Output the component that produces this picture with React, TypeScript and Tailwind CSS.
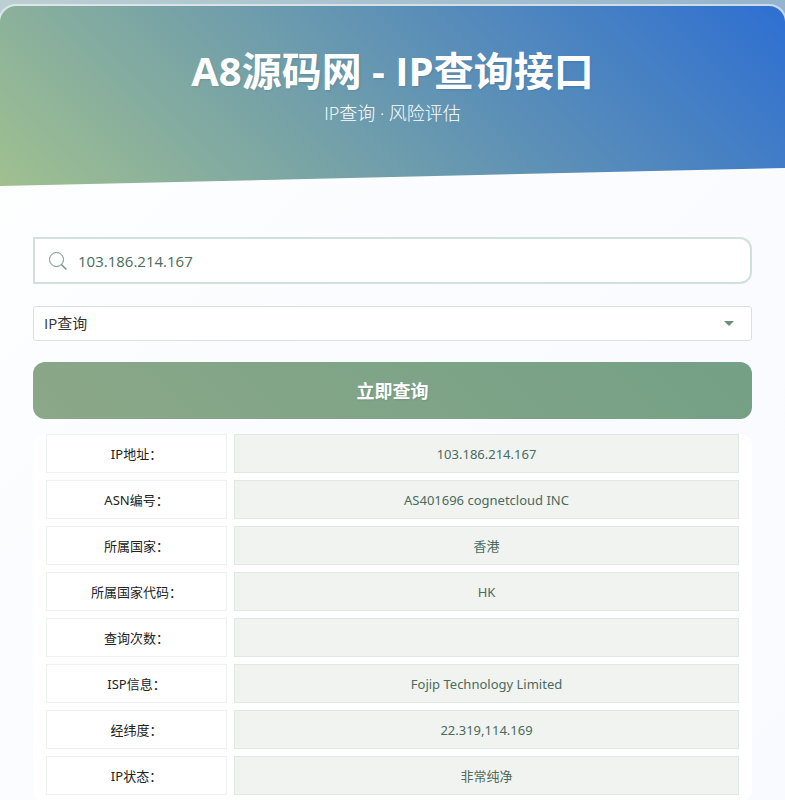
import { useState } from 'react'

const results = [
  { label: 'IP地址：', value: '103.186.214.167' },
  { label: 'ASN编号：', value: 'AS401696 cognetcloud INC' },
  { label: '所属国家：', value: '香港' },
  { label: '所属国家代码：', value: 'HK' },
  { label: '查询次数：', value: '' },
  { label: 'ISP信息：', value: 'Fojip Technology Limited' },
  { label: '经纬度：', value: '22.319,114.169' },
  { label: 'IP状态：', value: '非常纯净' },
]

function SearchIcon() {
  return (
    <svg className="size-[18px] shrink-0 text-[#6f9384]" viewBox="0 0 18 18" fill="none" stroke="currentColor" aria-hidden="true">
      <circle cx="7.5" cy="7.5" r="7" strokeWidth="1" />
      <path d="M12.4 12.4 17.4 17.4" strokeWidth="1.4" />
    </svg>
  )
}

function Header() {
  return (
    <header className="h-[180px] bg-[linear-gradient(45deg,#a0c08f,#2e6fd2)] pt-[41px] text-center text-white [clip-path:polygon(0_0,100%_0,100%_90%,0_100%)]">
      <h1 className="text-[40px] leading-[48px] font-bold [text-shadow:1px_1px_2px_rgba(0,0,0,0.1)]">
        A8源码网 - IP查询接口
      </h1>
      <p className="mt-1 text-lg leading-7 font-light">IP查询 · 风险评估</p>
    </header>
  )
}

function ResultTable() {
  return (
    <div className="mt-[15px] flex rounded-xl bg-white px-[6px]">
      <table className="-mt-[7px] w-full table-fixed border-separate border-spacing-[7px] text-center font-['Noto_Sans','Noto_Sans_CJK_SC',sans-serif] text-[13px] leading-5">
        <tbody>
          {results.map((r) => (
            <tr key={r.label} className="h-[39px]">
              <th scope="row" className="w-[181px] border border-[#edf2f0] bg-white p-0 font-normal text-[#222]">
                {r.label}
              </th>
              <td className="border border-[#e0e8e3] bg-[#f1f3f0] p-0 text-[#4a6b5d]">{r.value}</td>
            </tr>
          ))}
        </tbody>
      </table>
    </div>
  )
}

export default function App() {
  const [ip, setIp] = useState('103.186.214.167')
  const [mode, setMode] = useState('ip')

  return (
    <div className="min-h-screen overflow-hidden bg-[linear-gradient(135deg,#bccfd2,#84a9cb_70%)] pt-1 font-['Open_Sans','Noto_Sans_CJK_SC',sans-serif]">
      <main className="-mx-0.5 overflow-hidden rounded-t-[18px] border-2 border-b-0 border-white/50 bg-[linear-gradient(135deg,#fdfffe,#fbfcff_40%,#f8faff)] bg-clip-padding">
        <Header />
        <form className="px-[33px] pt-[51px]" onSubmit={(e) => e.preventDefault()}>
          <label className="flex h-[47px] items-center gap-[11px] rounded-r-xl border-2 border-[#d0e1d9] bg-white px-[14px]">
            <SearchIcon />
            <input
              aria-label="IP地址"
              value={ip}
              onChange={(e) => setIp(e.target.value)}
              className="min-w-0 flex-1 bg-transparent text-[15px] leading-6 text-[#4a6b5d] outline-none"
            />
          </label>
          <div className="relative mt-[22px]">
            <select
              aria-label="查询类型"
              value={mode}
              onChange={(e) => setMode(e.target.value)}
              className="h-[35px] w-full appearance-none rounded-[3px] border border-[#dcdfe6] bg-white px-[10px] text-[15px] text-[#333] outline-none"
            >
              <option value="ip">IP查询</option>
              <option value="risk">风险评估</option>
            </select>
            <svg className="pointer-events-none absolute top-[15px] right-[18px] h-[5px] w-[10px] text-[#6b9080]" viewBox="0 0 10 5" fill="currentColor" aria-hidden="true">
              <path d="M0 0h10L5 5z" />
            </svg>
          </div>
          <button
            type="submit"
            className="mt-[21px] h-[57px] w-full rounded-xl bg-[linear-gradient(45deg,#8ba888,#74a086)] text-lg font-bold text-white [text-shadow:1px_1px_2px_rgba(0,0,0,0.1)]"
          >
            立即查询
          </button>
          <ResultTable />
        </form>
      </main>
    </div>
  )
}
